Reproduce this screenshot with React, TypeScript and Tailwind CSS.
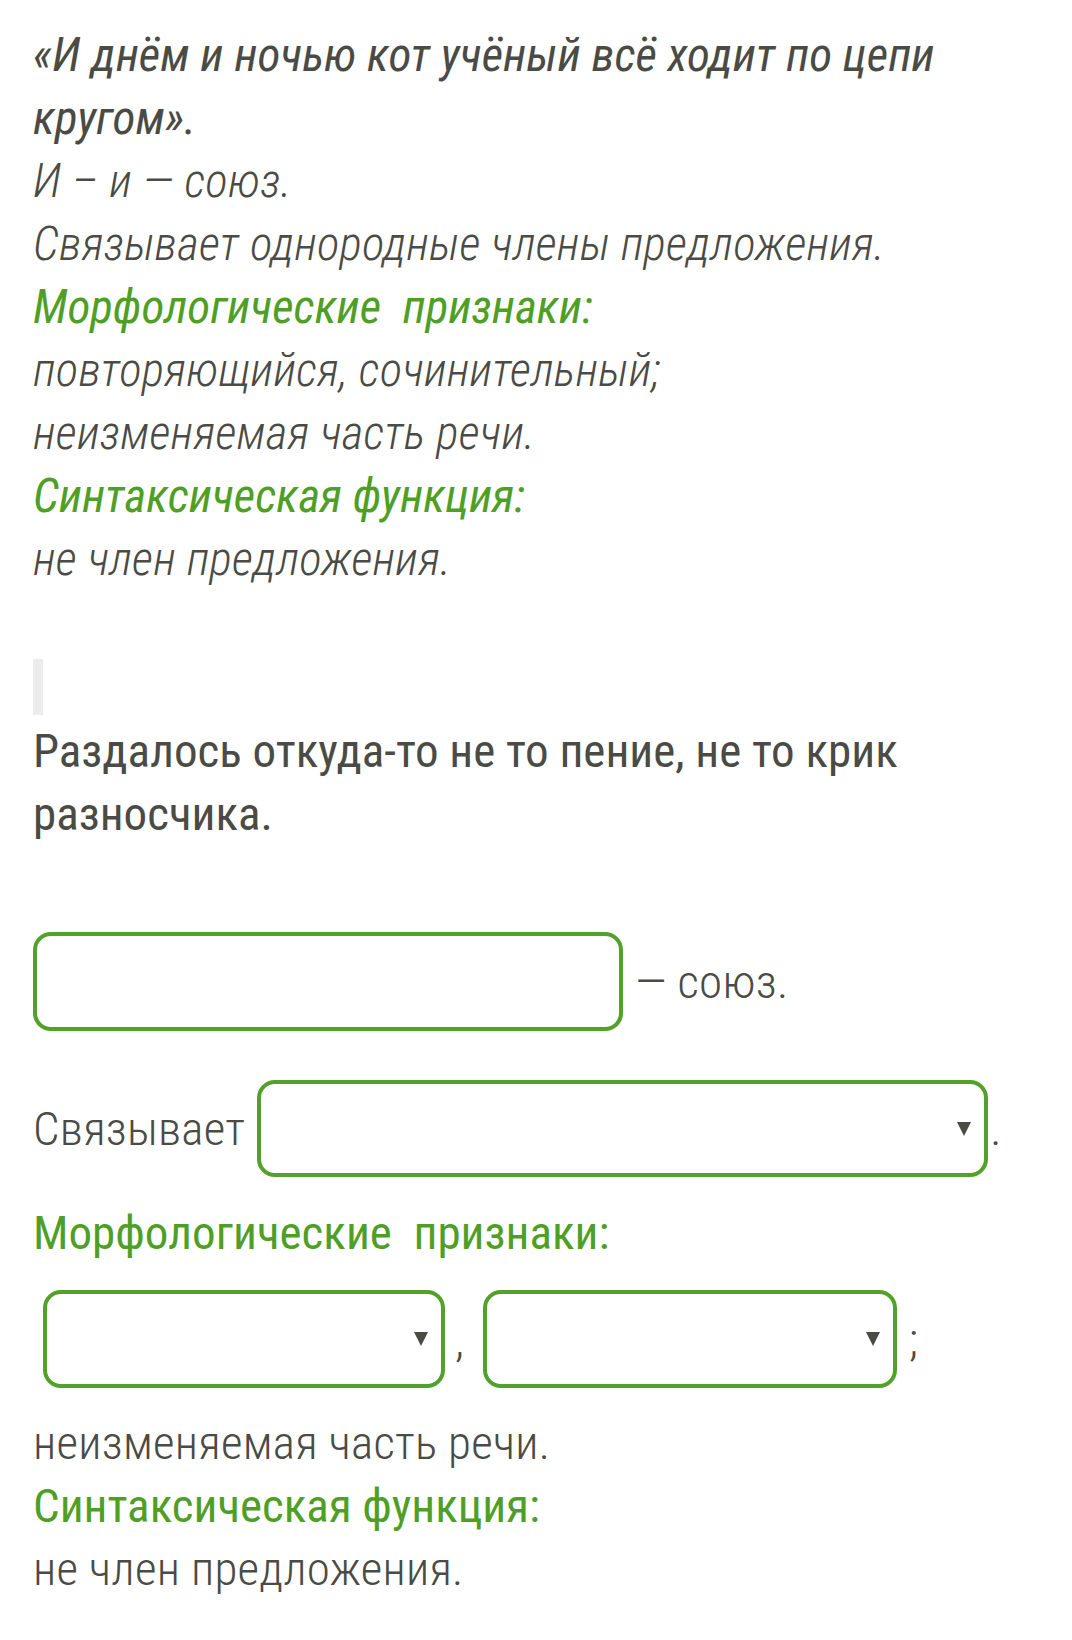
const green = "text-[#4f9f27]";
const light = "font-light tracking-[0.25px]";

function Arrow() {
  return (
    <svg width="14" height="14" viewBox="0 0 14 14" className="shrink-0">
      <polygon points="0,0 14,0 7,14" fill="#4a4b44" />
    </svg>
  );
}

function Select({ className }: { className: string }) {
  return (
    <div
      className={`flex items-center justify-end rounded-[18px] border-[4px] border-[#52a12a] bg-white pr-[13px] ${className}`}
    >
      <Arrow />
    </div>
  );
}

export default function App() {
  return (
    <div className="min-h-[1640px] bg-white pl-[33px] pr-[20px] font-['Roboto_Condensed',Roboto,sans-serif] text-[47px] leading-[63px] text-[#4a4b44]">
      {/* Sample answer */}
      <div className="flex flex-col pt-[23px] italic">
        <p className="font-normal">«И днём и ночью кот учёный всё ходит по цепи кругом».</p>
        <p className={light}>И – и — союз.</p>
        <p className={light}>Связывает однородные члены предложения.</p>
        <p className={`font-normal whitespace-pre ${green}`}>Морфологические  признаки:</p>
        <p className={light}>повторяющийся, сочинительный;</p>
        <p className={light}>неизменяемая часть речи.</p>
        <p className={`font-normal ${green}`}>Синтаксическая функция:</p>
        <p className={light}>не член предложения.</p>
      </div>

      <div className="mt-[69px] h-[56px] w-[10px] bg-[#ececec]" />

      {/* Task */}
      <div className="mt-[4px] flex flex-col">
        <p className="font-normal">Раздалось откуда-то не то пение, не то крик разносчика.</p>

        <div className="mt-[87px] flex items-center">
          <div className="h-[99px] w-[590px] rounded-[18px] border-[4px] border-[#52a12a] bg-white" />
          <span className={`ml-[12px] ${light}`}>— союз.</span>
        </div>

        <div className="mt-[49px] flex items-center">
          <span className={light}>Связывает</span>
          <Select className="ml-[12px] h-[97px] w-[731px]" />
          <span className={`ml-[2px] ${light}`}>.</span>
        </div>

        <p className={`mt-[24px] font-normal whitespace-pre ${green}`}>Морфологические  признаки:</p>

        <div className="mt-[26px] mb-[23px] flex items-center">
          <Select className="ml-[10px] h-[98px] w-[402px]" />
          <span className={`ml-[10px] w-[28px] ${light}`}>,</span>
          <Select className="h-[98px] w-[414px]" />
          <span className={`ml-[12px] ${light}`}>;</span>
        </div>

        <p className={light}>неизменяемая часть речи.</p>
        <p className={`font-normal ${green}`}>Синтаксическая функция:</p>
        <p className={light}>не член предложения.</p>
      </div>
    </div>
  );
}
